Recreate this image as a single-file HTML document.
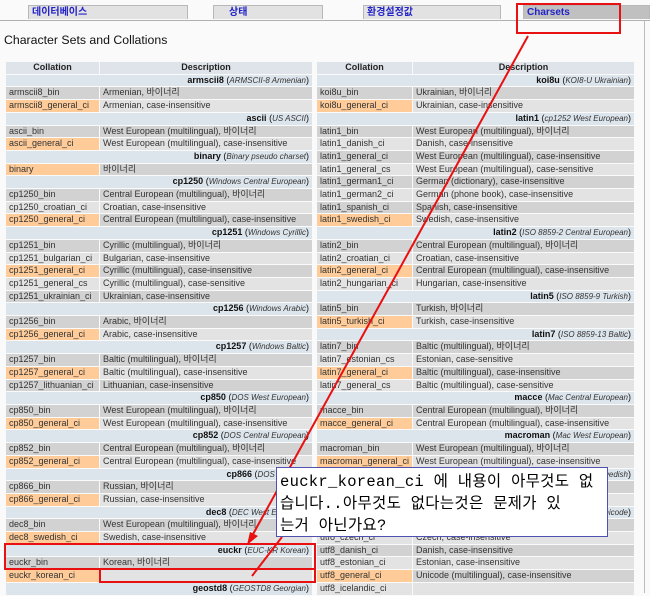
<!DOCTYPE html><html><head><meta charset="utf-8"><style>
body{margin:0;width:650px;height:593px;background:#fafafa;font-family:"Liberation Sans","Noto Sans CJK KR",sans-serif;position:relative;overflow:hidden}
.tab{position:absolute;top:5px;height:14px;background:#e2e2e2;border:1px solid #b8b8b8;border-bottom:none;color:#2323c8;font-weight:bold;font-size:10px;line-height:14px;padding-left:3px;box-sizing:border-box}
.tline{position:absolute;left:0;top:20px;width:650px;height:1px;background:#b0b0b0}
h1{position:absolute;left:4px;top:33px;margin:0;font-size:12.3px;font-weight:normal;color:#111}
table{position:absolute;top:61px;border-collapse:separate;border-spacing:1px;font-size:9px;color:#333;table-layout:fixed}
td,th{height:11.7px;padding:0 3px;white-space:nowrap;overflow:hidden;line-height:11.7px}
th{background:#dfe4ea;font-weight:bold;color:#222;text-align:center}
tr.g td{background:#dde5ec;text-align:right;color:#111}
tr.g td b{font-weight:bold}
tr.g td i{font-size:8px;color:#333}
tr.a td{background:#d2d2d2}
tr.b td{background:#e3e3e3}
td.o{background:#ffcc99!important}
.red{position:absolute;border:2px solid #e81010;box-sizing:border-box}
.call{position:absolute;left:276px;top:467px;width:332px;height:70px;background:#fff;border:1px solid #5050b0;box-sizing:border-box;font-family:"Liberation Mono","Noto Sans CJK KR",monospace;font-size:15.5px;line-height:22px;padding:3px 0 0 3px;color:#000;letter-spacing:0.3px}
</style></head><body>
<div class="tab" style="left:28px;width:160px">데이터베이스</div>
<div class="tab" style="left:213px;width:110px;padding-left:15px">상태</div>
<div class="tab" style="left:363px;width:138px">환경설정값</div>
<div class="tab" style="left:523px;width:127px;background:#c0c0c0">Charsets</div>
<div class="tline"></div>
<h1>Character Sets and Collations</h1>
<table style="left:5px;width:308px"><colgroup><col style="width:93px"><col></colgroup>
<tr><th>Collation</th><th>Description</th></tr>
<tr class="g"><td colspan="2"><b>armscii8</b> (<i>ARMSCII-8 Armenian</i>)</td></tr>
<tr class="a"><td>armscii8_bin</td><td>Armenian, 바이너리</td></tr>
<tr class="b"><td class="o">armscii8_general_ci</td><td>Armenian, case-insensitive</td></tr>
<tr class="g"><td colspan="2"><b>ascii</b> (<i>US ASCII</i>)</td></tr>
<tr class="a"><td>ascii_bin</td><td>West European (multilingual), 바이너리</td></tr>
<tr class="b"><td class="o">ascii_general_ci</td><td>West European (multilingual), case-insensitive</td></tr>
<tr class="g"><td colspan="2"><b>binary</b> (<i>Binary pseudo charset</i>)</td></tr>
<tr class="a"><td class="o">binary</td><td>바이너리</td></tr>
<tr class="g"><td colspan="2"><b>cp1250</b> (<i>Windows Central European</i>)</td></tr>
<tr class="a"><td>cp1250_bin</td><td>Central European (multilingual), 바이너리</td></tr>
<tr class="b"><td>cp1250_croatian_ci</td><td>Croatian, case-insensitive</td></tr>
<tr class="a"><td class="o">cp1250_general_ci</td><td>Central European (multilingual), case-insensitive</td></tr>
<tr class="g"><td colspan="2"><b>cp1251</b> (<i>Windows Cyrillic</i>)</td></tr>
<tr class="a"><td>cp1251_bin</td><td>Cyrillic (multilingual), 바이너리</td></tr>
<tr class="b"><td>cp1251_bulgarian_ci</td><td>Bulgarian, case-insensitive</td></tr>
<tr class="a"><td class="o">cp1251_general_ci</td><td>Cyrillic (multilingual), case-insensitive</td></tr>
<tr class="b"><td>cp1251_general_cs</td><td>Cyrillic (multilingual), case-sensitive</td></tr>
<tr class="a"><td>cp1251_ukrainian_ci</td><td>Ukrainian, case-insensitive</td></tr>
<tr class="g"><td colspan="2"><b>cp1256</b> (<i>Windows Arabic</i>)</td></tr>
<tr class="a"><td>cp1256_bin</td><td>Arabic, 바이너리</td></tr>
<tr class="b"><td class="o">cp1256_general_ci</td><td>Arabic, case-insensitive</td></tr>
<tr class="g"><td colspan="2"><b>cp1257</b> (<i>Windows Baltic</i>)</td></tr>
<tr class="a"><td>cp1257_bin</td><td>Baltic (multilingual), 바이너리</td></tr>
<tr class="b"><td class="o">cp1257_general_ci</td><td>Baltic (multilingual), case-insensitive</td></tr>
<tr class="a"><td>cp1257_lithuanian_ci</td><td>Lithuanian, case-insensitive</td></tr>
<tr class="g"><td colspan="2"><b>cp850</b> (<i>DOS West European</i>)</td></tr>
<tr class="a"><td>cp850_bin</td><td>West European (multilingual), 바이너리</td></tr>
<tr class="b"><td class="o">cp850_general_ci</td><td>West European (multilingual), case-insensitive</td></tr>
<tr class="g"><td colspan="2"><b>cp852</b> (<i>DOS Central European</i>)</td></tr>
<tr class="a"><td>cp852_bin</td><td>Central European (multilingual), 바이너리</td></tr>
<tr class="b"><td class="o">cp852_general_ci</td><td>Central European (multilingual), case-insensitive</td></tr>
<tr class="g"><td colspan="2"><b>cp866</b> (<i>DOS Russian</i>)</td></tr>
<tr class="a"><td>cp866_bin</td><td>Russian, 바이너리</td></tr>
<tr class="b"><td class="o">cp866_general_ci</td><td>Russian, case-insensitive</td></tr>
<tr class="g"><td colspan="2"><b>dec8</b> (<i>DEC West European</i>)</td></tr>
<tr class="a"><td>dec8_bin</td><td>West European (multilingual), 바이너리</td></tr>
<tr class="b"><td class="o">dec8_swedish_ci</td><td>Swedish, case-insensitive</td></tr>
<tr class="g"><td colspan="2"><b>euckr</b> (<i>EUC-KR Korean</i>)</td></tr>
<tr class="a"><td>euckr_bin</td><td>Korean, 바이너리</td></tr>
<tr class="b"><td class="o">euckr_korean_ci</td><td></td></tr>
<tr class="g"><td colspan="2"><b>geostd8</b> (<i>GEOSTD8 Georgian</i>)</td></tr>
</table>
<table style="left:316px;width:319px"><colgroup><col style="width:95px"><col></colgroup>
<tr><th>Collation</th><th>Description</th></tr>
<tr class="g"><td colspan="2"><b>koi8u</b> (<i>KOI8-U Ukrainian</i>)</td></tr>
<tr class="a"><td>koi8u_bin</td><td>Ukrainian, 바이너리</td></tr>
<tr class="b"><td class="o">koi8u_general_ci</td><td>Ukrainian, case-insensitive</td></tr>
<tr class="g"><td colspan="2"><b>latin1</b> (<i>cp1252 West European</i>)</td></tr>
<tr class="a"><td>latin1_bin</td><td>West European (multilingual), 바이너리</td></tr>
<tr class="b"><td>latin1_danish_ci</td><td>Danish, case-insensitive</td></tr>
<tr class="a"><td>latin1_general_ci</td><td>West European (multilingual), case-insensitive</td></tr>
<tr class="b"><td>latin1_general_cs</td><td>West European (multilingual), case-sensitive</td></tr>
<tr class="a"><td>latin1_german1_ci</td><td>German (dictionary), case-insensitive</td></tr>
<tr class="b"><td>latin1_german2_ci</td><td>German (phone book), case-insensitive</td></tr>
<tr class="a"><td>latin1_spanish_ci</td><td>Spanish, case-insensitive</td></tr>
<tr class="b"><td class="o">latin1_swedish_ci</td><td>Swedish, case-insensitive</td></tr>
<tr class="g"><td colspan="2"><b>latin2</b> (<i>ISO 8859-2 Central European</i>)</td></tr>
<tr class="a"><td>latin2_bin</td><td>Central European (multilingual), 바이너리</td></tr>
<tr class="b"><td>latin2_croatian_ci</td><td>Croatian, case-insensitive</td></tr>
<tr class="a"><td class="o">latin2_general_ci</td><td>Central European (multilingual), case-insensitive</td></tr>
<tr class="b"><td>latin2_hungarian_ci</td><td>Hungarian, case-insensitive</td></tr>
<tr class="g"><td colspan="2"><b>latin5</b> (<i>ISO 8859-9 Turkish</i>)</td></tr>
<tr class="a"><td>latin5_bin</td><td>Turkish, 바이너리</td></tr>
<tr class="b"><td class="o">latin5_turkish_ci</td><td>Turkish, case-insensitive</td></tr>
<tr class="g"><td colspan="2"><b>latin7</b> (<i>ISO 8859-13 Baltic</i>)</td></tr>
<tr class="a"><td>latin7_bin</td><td>Baltic (multilingual), 바이너리</td></tr>
<tr class="b"><td>latin7_estonian_cs</td><td>Estonian, case-sensitive</td></tr>
<tr class="a"><td class="o">latin7_general_ci</td><td>Baltic (multilingual), case-insensitive</td></tr>
<tr class="b"><td>latin7_general_cs</td><td>Baltic (multilingual), case-sensitive</td></tr>
<tr class="g"><td colspan="2"><b>macce</b> (<i>Mac Central European</i>)</td></tr>
<tr class="a"><td>macce_bin</td><td>Central European (multilingual), 바이너리</td></tr>
<tr class="b"><td class="o">macce_general_ci</td><td>Central European (multilingual), case-insensitive</td></tr>
<tr class="g"><td colspan="2"><b>macroman</b> (<i>Mac West European</i>)</td></tr>
<tr class="a"><td>macroman_bin</td><td>West European (multilingual), 바이너리</td></tr>
<tr class="b"><td class="o">macroman_general_ci</td><td>West European (multilingual), case-insensitive</td></tr>
<tr class="g"><td colspan="2"><b>swe7</b> (<i>7bit Swedish</i>)</td></tr>
<tr class="a"><td>swe7_bin</td><td>Swedish, 바이너리</td></tr>
<tr class="b"><td class="o">swe7_swedish_ci</td><td>Swedish, case-insensitive</td></tr>
<tr class="g"><td colspan="2"><b>utf8</b> (<i>UTF-8 Unicode</i>)</td></tr>
<tr class="a"><td>utf8_bin</td><td>Unicode (multilingual), 바이너리</td></tr>
<tr class="b"><td>utf8_czech_ci</td><td>Czech, case-insensitive</td></tr>
<tr class="a"><td>utf8_danish_ci</td><td>Danish, case-insensitive</td></tr>
<tr class="b"><td>utf8_estonian_ci</td><td>Estonian, case-insensitive</td></tr>
<tr class="a"><td class="o">utf8_general_ci</td><td>Unicode (multilingual), case-insensitive</td></tr>
<tr class="b"><td>utf8_icelandic_ci</td><td></td></tr>
</table>
<div style="position:absolute;left:644px;top:20px;width:1px;height:573px;background:#bbb"></div>
<div class="red" style="left:516px;top:3px;width:105px;height:31px"></div>
<div class="red" style="left:4px;top:543px;width:312px;height:27px"></div>
<div class="red" style="left:99px;top:568px;width:217px;height:15px"></div>
<svg width="650" height="593" style="position:absolute;left:0;top:0" >
<line x1="528" y1="36" x2="252" y2="536" stroke="#e81010" stroke-width="2"/>
<polygon points="247,545 250,532 258,536" fill="#e81010"/>
<line x1="282" y1="537" x2="252" y2="576" stroke="#e81010" stroke-width="2"/>
</svg>
<div class="call">euckr_korean_ci 에 내용이 아무것도 없<br>습니다..아무것도 없다는것은 문제가 있<br>는거 아닌가요?</div>
</body></html>
